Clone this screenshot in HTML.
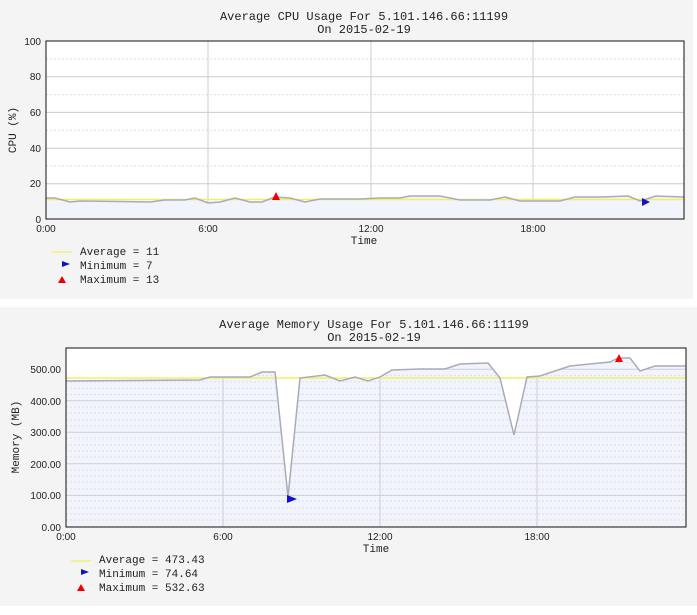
<!DOCTYPE html><html><head><style>
body{margin:0;background:#fff;width:697px;height:615px;overflow:hidden}
svg{display:block}
.m{font-family:"Liberation Mono",monospace;font-size:12px;fill:#222}
.s{font-family:"Liberation Sans",sans-serif;font-size:10px;fill:#222}
</style></head><body>
<svg width="697" height="615" xmlns="http://www.w3.org/2000/svg">
<rect x="0" y="0" width="693" height="299" fill="#f4f4f4"/>
<rect x="0" y="307" width="697" height="299" fill="#f4f4f4"/>
<!-- CPU -->
<text class="m" x="364" y="20" text-anchor="middle">Average CPU Usage For 5.101.146.66:11199</text>
<text class="m" x="364" y="33" text-anchor="middle">On 2015-02-19</text>
<rect x="46" y="41" width="638" height="178" fill="#fff"/>
<g stroke="#ddd" stroke-dasharray="2,2"><line x1="46" x2="684" y1="58.9" y2="58.9"/><line x1="46" x2="684" y1="94.6" y2="94.6"/><line x1="46" x2="684" y1="130.3" y2="130.3"/><line x1="46" x2="684" y1="166" y2="166"/><line x1="46" x2="684" y1="201.7" y2="201.7"/></g>
<g stroke="#ccc"><line x1="46" x2="684" y1="76.8" y2="76.8"/><line x1="46" x2="684" y1="112.4" y2="112.4"/><line x1="46" x2="684" y1="148.2" y2="148.2"/><line x1="46" x2="684" y1="183.8" y2="183.8"/>
<line x1="208" x2="208" y1="41" y2="219"/><line x1="371" x2="371" y1="41" y2="219"/><line x1="533" x2="533" y1="41" y2="219"/></g>
<polygon fill="#f2f4fb" points="46,219 46,198 55,198 70,202 80,201 150,202 165,200 185,200 195,198 208,203 220,202 235,198 250,202 262,202 275,197 290,198 305,202 320,199 340,199 360,199 380,198 400,198 410,196 440,196 460,200 490,200 505,197 520,201 560,201 575,197 600,197 628,196 640,201 656,196 684,197 684,219"/>
<line x1="46" x2="684" y1="199.5" y2="199.5" stroke="#f0f060" stroke-width="1.5"/>
<polyline fill="none" stroke="#aab" stroke-width="1.5" points="46,198 55,198 70,202 80,201 150,202 165,200 185,200 195,198 208,203 220,202 235,198 250,202 262,202 275,197 290,198 305,202 320,199 340,199 360,199 380,198 400,198 410,196 440,196 460,200 490,200 505,197 520,201 560,201 575,197 600,197 628,196 640,201 656,196 684,197"/>
<rect x="46" y="41" width="638" height="178" fill="none" stroke="#111"/>
<polygon points="272,200 276,192 280,200" fill="#e00"/>
<polygon points="642,198 650,202 642,206" fill="#11c"/>
<g class="s" text-anchor="end"><text x="41" y="45">100</text><text x="41" y="80">80</text><text x="41" y="116">60</text><text x="41" y="152">40</text><text x="41" y="187">20</text><text x="41" y="223">0</text></g>
<g class="s" text-anchor="middle"><text x="46" y="232">0:00</text><text x="208" y="232">6:00</text><text x="371" y="232">12:00</text><text x="533" y="232">18:00</text></g>
<text class="m" x="364" y="244" text-anchor="middle" style="font-size:11px">Time</text>
<text class="m" x="16" y="130" text-anchor="middle" transform="rotate(-90 16 130)" style="font-size:11px">CPU (%)</text>
<line x1="52" x2="72" y1="252" y2="252" stroke="#ee4"/>
<polygon points="62,261 70,264 62,267" fill="#11c"/>
<polygon points="58,283 62,276 66,283" fill="#e00"/>
<g class="m" style="font-size:11px"><text x="80" y="255">Average = 11</text><text x="80" y="269">Minimum = 7</text><text x="80" y="283">Maximum = 13</text></g>
<!-- Memory -->
<text class="m" x="374" y="328" text-anchor="middle">Average Memory Usage For 5.101.146.66:11199</text>
<text class="m" x="374" y="341" text-anchor="middle">On 2015-02-19</text>
<rect x="66" y="348" width="620" height="179" fill="#f2f4fb"/>
<g stroke="#dde" stroke-dasharray="2,2">
<line x1="66" x2="686" y1="356" y2="356"/><line x1="66" x2="686" y1="362.6" y2="362.6"/><line x1="66" x2="686" y1="375.6" y2="375.6"/><line x1="66" x2="686" y1="381.9" y2="381.9"/><line x1="66" x2="686" y1="388.2" y2="388.2"/><line x1="66" x2="686" y1="394.5" y2="394.5"/>
<line x1="66" x2="686" y1="407" y2="407"/><line x1="66" x2="686" y1="413" y2="413"/><line x1="66" x2="686" y1="420" y2="420"/><line x1="66" x2="686" y1="426" y2="426"/>
<line x1="66" x2="686" y1="438" y2="438"/><line x1="66" x2="686" y1="445" y2="445"/><line x1="66" x2="686" y1="451" y2="451"/><line x1="66" x2="686" y1="457" y2="457"/>
<line x1="66" x2="686" y1="470" y2="470"/><line x1="66" x2="686" y1="476" y2="476"/><line x1="66" x2="686" y1="482" y2="482"/><line x1="66" x2="686" y1="489" y2="489"/>
<line x1="66" x2="686" y1="501" y2="501"/><line x1="66" x2="686" y1="508" y2="508"/><line x1="66" x2="686" y1="514" y2="514"/><line x1="66" x2="686" y1="520" y2="520"/></g>
<g stroke="#ccd"><line x1="66" x2="686" y1="369.3" y2="369.3"/><line x1="66" x2="686" y1="400.8" y2="400.8"/><line x1="66" x2="686" y1="432.3" y2="432.3"/><line x1="66" x2="686" y1="463.8" y2="463.8"/><line x1="66" x2="686" y1="495.4" y2="495.4"/>
<line x1="223" x2="223" y1="348" y2="527"/><line x1="380" x2="380" y1="348" y2="527"/><line x1="537" x2="537" y1="348" y2="527"/></g>
<polygon fill="#fff" points="66,348 686,348 686,366 655,366 640,371 630,358 618,358 610,362 590,364 570,366 540,376 527,377 514,435 500,378 488,363 460,364 445,369 420,369 392,370 380,377 368,381 355,377 340,381 325,375 300,378 288,497 275,372 262,372 250,377 210,377 200,380 66,381"/>
<line x1="66" x2="686" y1="378" y2="378" stroke="#f0f060" stroke-width="1.5"/>
<polyline fill="none" stroke="#aab" stroke-width="1.5" points="66,381 200,380 210,377 250,377 262,372 275,372 288,497 300,378 325,375 340,381 355,377 368,381 380,377 392,370 420,369 445,369 460,364 488,363 500,378 514,435 527,377 540,376 570,366 590,364 610,362 618,358 630,358 640,371 655,366 686,366"/>
<rect x="66" y="348" width="620" height="179" fill="none" stroke="#111"/>
<polygon points="287,495 297,499 287,503" fill="#11c"/>
<polygon points="615,362 619,354 623,362" fill="#e00"/>
<g class="s" text-anchor="end"><text x="61" y="373">500.00</text><text x="61" y="405">400.00</text><text x="61" y="436">300.00</text><text x="61" y="468">200.00</text><text x="61" y="499">100.00</text><text x="61" y="531">0.00</text></g>
<g class="s" text-anchor="middle"><text x="66" y="540">0:00</text><text x="223" y="540">6:00</text><text x="380" y="540">12:00</text><text x="537" y="540">18:00</text></g>
<text class="m" x="376" y="552" text-anchor="middle" style="font-size:11px">Time</text>
<text class="m" x="19" y="437" text-anchor="middle" transform="rotate(-90 19 437)" style="font-size:11px">Memory (MB)</text>
<line x1="71" x2="91" y1="561" y2="561" stroke="#ee4"/>
<polygon points="81,569 89,572 81,575" fill="#11c"/>
<polygon points="77,591 81,584 85,591" fill="#e00"/>
<g class="m" style="font-size:11px"><text x="99" y="563">Average = 473.43</text><text x="99" y="577">Minimum = 74.64</text><text x="99" y="591">Maximum = 532.63</text></g>
</svg>
</body></html>
